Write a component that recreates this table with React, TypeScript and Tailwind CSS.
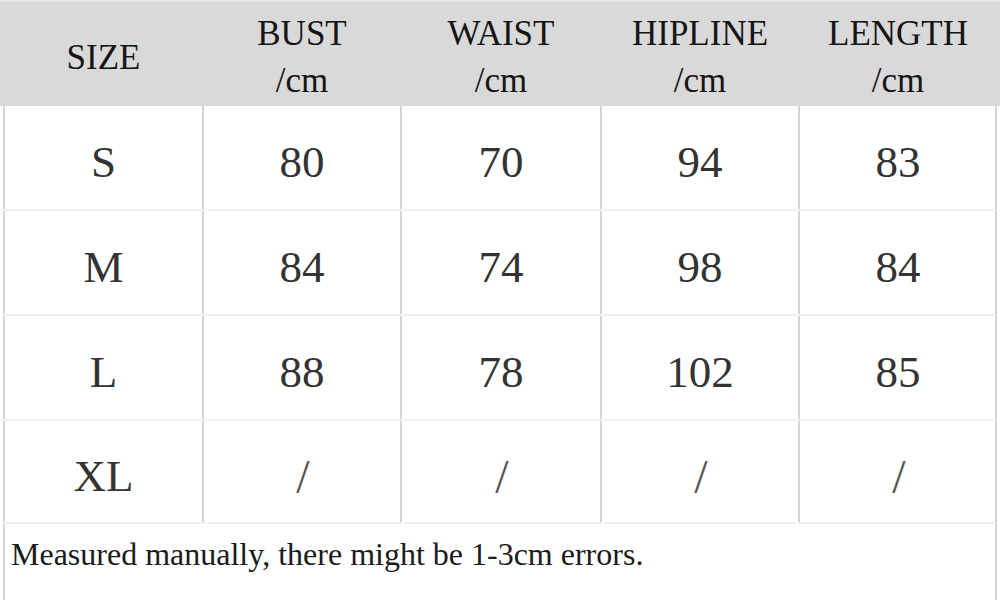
const HEADERS = [
  { title: 'SIZE' },
  { title: 'BUST', unit: '/cm' },
  { title: 'WAIST', unit: '/cm' },
  { title: 'HIPLINE', unit: '/cm' },
  { title: 'LENGTH', unit: '/cm' },
];

const ROWS = [
  ['S', '80', '70', '94', '83'],
  ['M', '84', '74', '98', '84'],
  ['L', '88', '78', '102', '85'],
  ['XL', '/', '/', '/', '/'],
];

const COLS = 'grid grid-cols-[199px_198px_200px_198px_198px]';
const serif = { fontFamily: '"Liberation Serif", "Times New Roman", serif' };

export default function App() {
  return (
    <div className="w-[1000px] h-[600px] bg-white text-[#1a1a1a] overflow-hidden" style={serif}>
      {/* header band */}
      <div className="h-[106px] bg-[#d9d9d9] border-t-2 border-[#e6e6e6] pl-[4px]">
        <div className={`${COLS} h-full`}>
          {HEADERS.map((h) => (
            <div key={h.title} className="flex flex-col items-center justify-center text-[35px] leading-[47px] pt-[6px] text-[#151515]">
              <span>{h.title}</span>
              {h.unit && <span>{h.unit}</span>}
            </div>
          ))}
        </div>
      </div>

      {/* body rows */}
      <div className="pl-[3px]">
        {ROWS.map((row, ri) => (
          <div
            key={row[0]}
            className={`${COLS} ${ri === ROWS.length - 1 ? 'h-[103px]' : 'h-[105px]'} border-b-2 border-[#f0f0f0] w-[994px] border-r-2 border-r-[#d4d4d4]`}
          >
            {row.map((cell, ci) => (
              <div
                key={ci}
                className="flex items-center justify-center border-l-2 border-[#d4d4d4] text-[45px] text-[#333] pt-[10px]"
              >
                {cell === '/' ? <span className="text-[48px] text-[#555] pl-[2px]">/</span> : cell}
              </div>
            ))}
          </div>
        ))}

        {/* footer note */}
        <div className="h-[78px] w-[994px] border-l-2 border-r-2 border-[#d4d4d4] pl-[6px] pt-[6px] text-[32px] text-[#1a1a1a]">
          Measured manually, there might be 1-3cm errors.
        </div>
      </div>
    </div>
  );
}
